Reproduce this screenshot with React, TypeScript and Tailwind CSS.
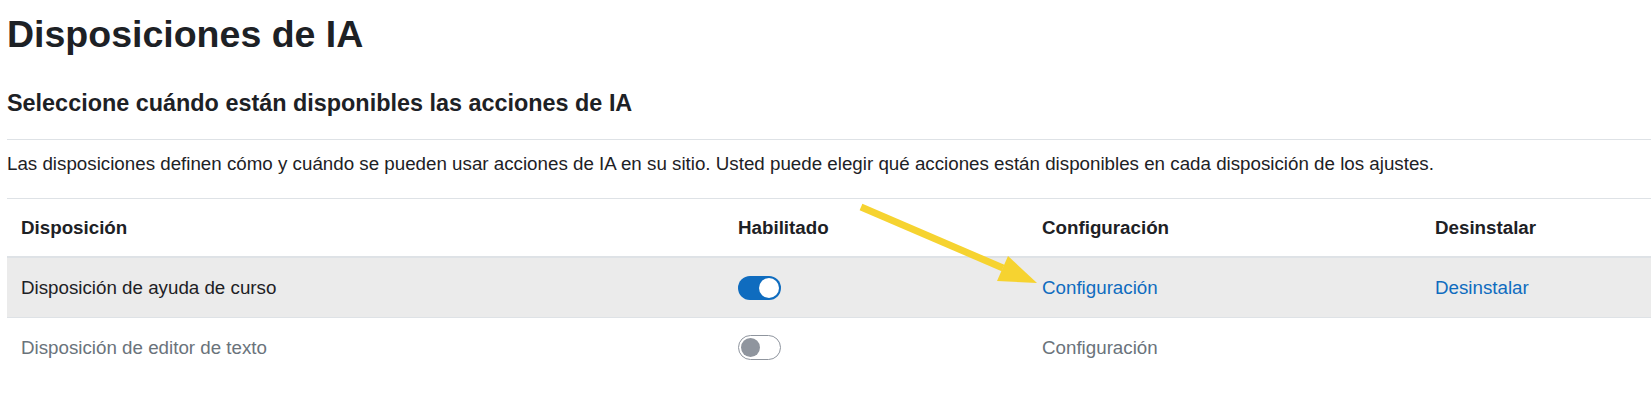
import React from "react";

const font = { fontFamily: '"Liberation Sans", Arial, sans-serif' };

function Toggle({ on }: { on: boolean }) {
  if (on) {
    return (
      <div className="flex h-[24px] w-[43px] items-center justify-end rounded-full bg-[#0f6cbf] pr-[2px]">
        <div className="h-[20px] w-[20px] rounded-full bg-white" />
      </div>
    );
  }
  return (
    <div className="flex h-[25px] w-[43px] items-center justify-start rounded-full border border-[#8f959e] bg-white pl-[2px]">
      <div className="h-[19px] w-[19px] rounded-full bg-[#8f959e]" />
    </div>
  );
}

export default function App() {
  return (
    <div
      className="relative h-[412px] w-[1651px] overflow-hidden bg-white pl-[7px] text-[#1d2125]"
      style={font}
    >
      <h1 className="mt-[12px] text-[37.5px] font-bold leading-[45px]">Disposiciones de IA</h1>
      <h3 className="mt-[32px] text-[23.4px] font-bold leading-[28px]">
        Seleccione cuándo están disponibles las acciones de IA
      </h3>
      <div className="mt-[22px] border-t border-[#dee2e6] pt-[10px] pb-[20px] text-[18.75px] leading-[28px]">
        Las disposiciones definen cómo y cuándo se pueden usar acciones de IA en su sitio. Usted puede elegir qué
        acciones están disponibles en cada disposición de los ajustes.
      </div>
      <div className="border-t border-[#dee2e6] text-[18.75px] leading-[28px]">
        <div className="grid h-[59px] grid-cols-[717px_304px_393px_1fr] items-center border-b-2 border-[#dee2e6] font-bold">
          <div className="pl-[14px]">Disposición</div>
          <div className="pl-[14px]">Habilitado</div>
          <div className="pl-[14px]">Configuración</div>
          <div className="pl-[14px]">Desinstalar</div>
        </div>
        <div className="grid h-[60px] grid-cols-[717px_304px_393px_1fr] items-center border-b border-[#dee2e6] bg-[#ebebeb]">
          <div className="pl-[14px]">Disposición de ayuda de curso</div>
          <div className="pl-[14px]">
            <Toggle on />
          </div>
          <div className="pl-[14px] text-[#0f6cbf]">Configuración</div>
          <div className="pl-[14px] text-[#0f6cbf]">Desinstalar</div>
        </div>
        <div className="grid h-[59px] grid-cols-[717px_304px_393px_1fr] items-center text-[#6a737b]">
          <div className="pl-[14px]">Disposición de editor de texto</div>
          <div className="pl-[14px]">
            <Toggle on={false} />
          </div>
          <div className="pl-[14px]">Configuración</div>
          <div className="pl-[14px]" />
        </div>
      </div>
      <svg
        className="pointer-events-none absolute left-0 top-0"
        width="1651"
        height="412"
        viewBox="0 0 1651 412"
      >
        <line x1="861" y1="207" x2="1003" y2="268" stroke="#f6d330" strokeWidth="7" />
        <polygon points="1008,256 997,281 1037,283" fill="#f6d330" />
      </svg>
    </div>
  );
}
